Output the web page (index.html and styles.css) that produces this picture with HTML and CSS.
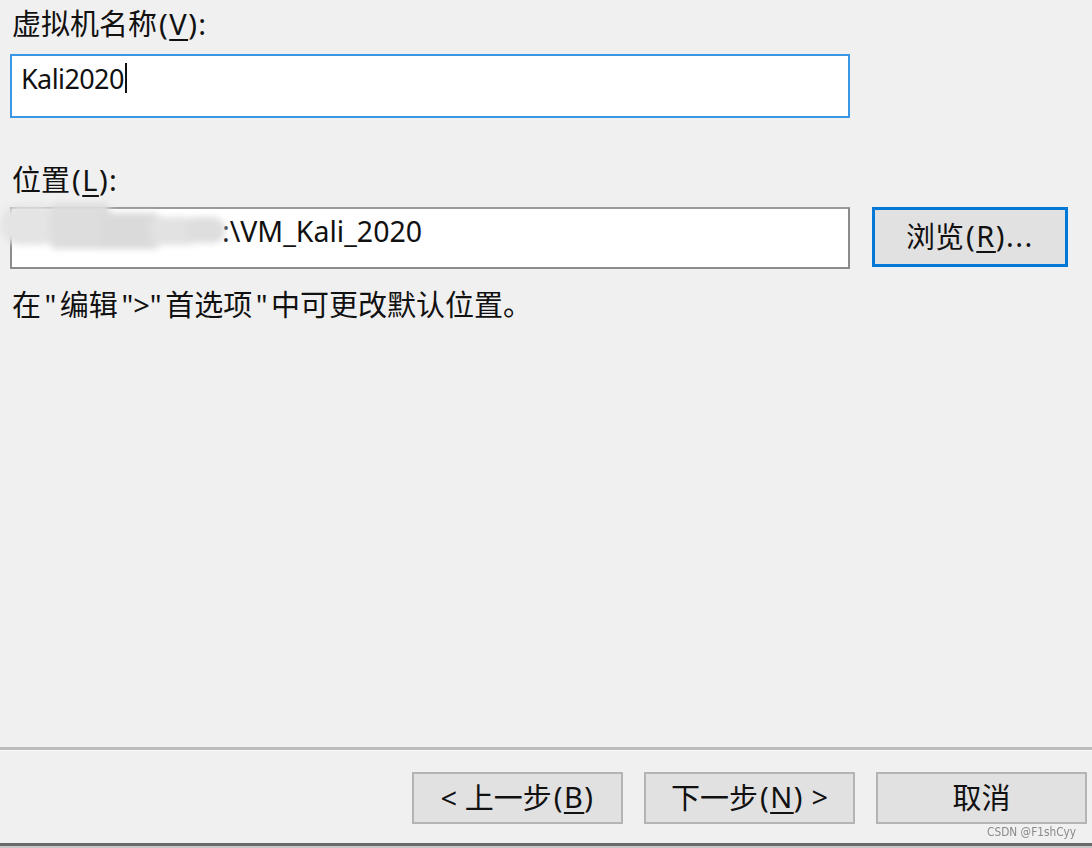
FILE: index.html
```html
<!DOCTYPE html>
<html lang="zh-CN">
<head>
<meta charset="utf-8">
<link rel="stylesheet" href="styles.css">
</head>
<body>
<div class="dialog">
  <div class="content">
    <div class="label label-name">虚拟机名称<span class="acc">(<u>V</u>):</span></div>
    <div class="input input-focus"><span class="value">Kali2020</span><span class="caret"></span></div>
    <div class="label label-loc">位置<span class="acc">(<u>L</u>):</span></div>
    <div class="row">
      <div class="input input-plain">
        <span class="value value-path">:\VM_Kali_2020</span>
        <div class="blur">
          <span class="b b1"></span><span class="b b2"></span><span class="b b3"></span><span class="b b4"></span><span class="b b5"></span>
        </div>
      </div>
      <div class="btn btn-browse">浏览<span class="acc">(<u>R</u>)...</span></div>
    </div>
    <div class="hint">在<span class="q">"</span>编辑<span class="q">"&gt;"</span>首选项<span class="q">"</span>中可更改默认位置。</div>
  </div>
  <div class="sep"></div>
  <div class="footer">
    <div class="btn btn-foot">&lt; 上一步<span class="acc">(<u>B</u>)</span></div>
    <div class="btn btn-foot">下一步<span class="acc">(<u>N</u>)</span>&nbsp;&gt;</div>
    <div class="btn btn-foot">取消</div>
  </div>
  <div class="bottom"></div>
  <div class="watermark">CSDN @F1shCyy</div>
</div>
</body>
</html>
```
FILE: styles.css
```css
* { box-sizing: border-box; }
html, body { margin: 0; padding: 0; }
body {
  width: 1092px;
  height: 848px;
  background: #f0f0f0;
  font-family: "Noto Sans", "Noto Sans CJK SC", sans-serif;
  color: #111;
  overflow: hidden;
}
.dialog {
  position: relative;
  height: 848px;
  display: flex;
  flex-direction: column;
}
.content {
  flex: 1;
  padding: 4px 0 0 10px;
}
u { text-underline-offset: 4px; text-decoration-thickness: 2px; }
.acc { letter-spacing: 1.5px; padding-left: 2px; }
.label {
  font-size: 29px;
  line-height: 40px;
  padding-left: 2px;
  font-family: "Noto Sans", "Noto Sans CJK SC", sans-serif;
}
.label-name { height: 50px; }
.label-loc { margin-top: 42px; height: 47px; }
.input {
  position: relative;
  width: 840px;
  background: #fff;
  display: flex;
  align-items: center;
}
.input-focus {
  height: 64px;
  border: 2px solid #3c96e6;
  padding-left: 9px;
  padding-bottom: 16px;
}
.input-plain {
  height: 62px;
  border: 2px solid #8c8c8c;
  border-top-color: #9a9a9a;
  padding-left: 210px;
  padding-bottom: 14px;
  overflow: visible;
}
.value {
  font-size: 27px;
  letter-spacing: -0.6px;
  color: #111;
}
.value-path {
  font-size: 28.5px;
  letter-spacing: 0;
}
.caret {
  display: inline-block;
  width: 2px;
  height: 30px;
  background: #111;
  margin-left: 1px;
}
.row {
  display: flex;
  gap: 22px;
  align-items: flex-start;
}
.blur {
  position: absolute;
  left: -12px;
  top: -10px;
  width: 236px;
  height: 58px;
  filter: blur(3px);
}
.b { position: absolute; background: #dcdcdc; border-radius: 6px; }
.b1 { left: 0; top: 6px; width: 60px; height: 40px; background: #e4e4e4; border-radius: 20px; }
.b2 { left: 50px; top: 4px; width: 60px; height: 46px; background: #dddddd; }
.b3 { left: 100px; top: 14px; width: 60px; height: 36px; background: #dadada; }
.b4 { left: 150px; top: 18px; width: 45px; height: 28px; background: #e2e2e2; }
.b5 { left: 185px; top: 18px; width: 40px; height: 26px; background: #dedede; border-radius: 12px; }
.btn {
  display: flex;
  align-items: center;
  justify-content: center;
  background: #e1e1e1;
  font-family: "Noto Sans", "Noto Sans CJK SC", sans-serif;
  font-size: 29px;
  color: #111;
}
.btn-browse {
  width: 196px;
  height: 60px;
  border: 3px solid #0078d7;
  padding-bottom: 4px;
}
.hint {
  margin-top: 14px;
  padding-left: 2px;
  font-family: "Noto Sans CJK SC", sans-serif;
  font-size: 29px;
  line-height: 40px;
}
.q {
  font-family: "Noto Sans", sans-serif;
  display: inline-block;
  padding: 0 3.5px;
}
.sep {
  height: 4px;
  border-top: 3px solid #bdbdbd;
  border-bottom: 1px solid #fafafa;
}
.footer {
  height: 92px;
  display: flex;
  justify-content: flex-end;
  gap: 21px;
  padding: 21px 5px 0 0;
}
.btn-foot {
  width: 211px;
  height: 52px;
  border: 2px solid #b4b4b4;
  padding-bottom: 4px;
}
.bottom {
  height: 5px;
  border-top: 3px solid #6a6a6a;
  background: #c8c8c8;
}
.watermark {
  position: absolute;
  right: 16px;
  bottom: 9px;
  font-family: "DejaVu Sans", sans-serif;
  font-size: 12px;
  color: #8a8a8a;
  transform: scaleX(0.88);
  transform-origin: right center;
}
```
